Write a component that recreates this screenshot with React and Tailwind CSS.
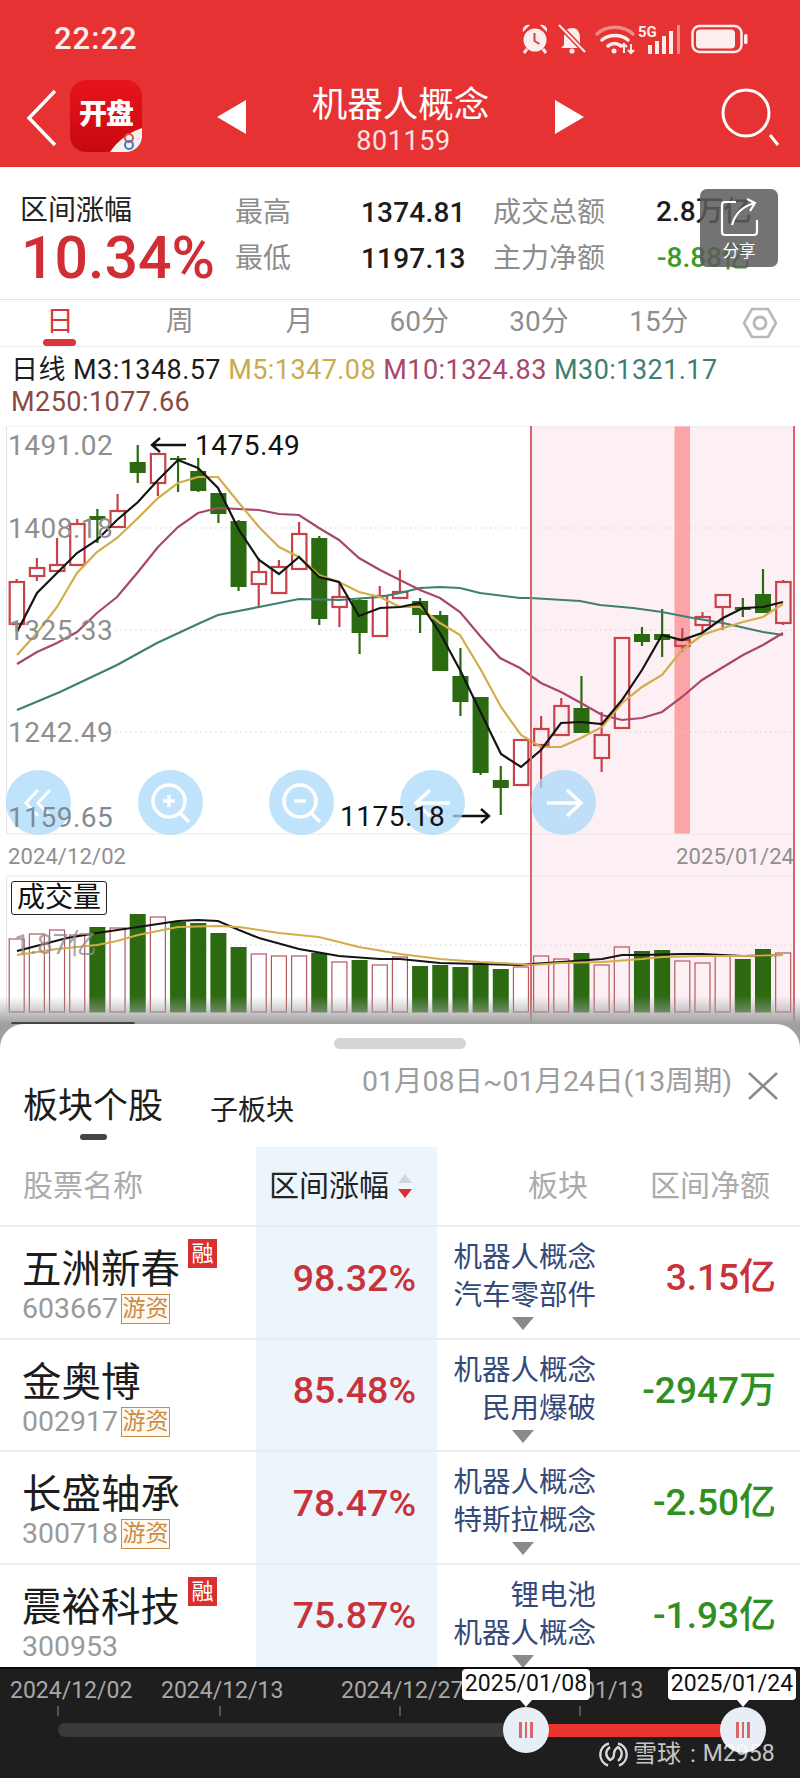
import React from 'react';

const FONT = { fontFamily: 'Roboto, "Noto Sans CJK SC", sans-serif' };

// candles: [wickTop, bodyTop, bodyBottom, wickBottom, up]
const candles = [
  [579, 582, 624, 633, 1], [558, 568, 576, 581, 1], [538, 565, 571, 571, 1], [519, 524, 565, 565, 1],
  [509, 516, 520, 543, 0], [494, 511, 527, 527, 1], [445, 462, 473, 483, 0], [454, 454, 483, 496, 1],
  [456, 458, 460, 492, 0], [458, 471, 491, 492, 0], [493, 493, 514, 523, 0], [520, 521, 587, 591, 0],
  [558, 572, 584, 607, 1], [560, 567, 593, 593, 1], [522, 534, 569, 570, 1], [536, 538, 619, 625, 0],
  [583, 597, 607, 627, 1], [599, 600, 633, 654, 0], [586, 596, 636, 636, 1], [570, 592, 598, 598, 1],
  [598, 601, 615, 633, 0], [611, 615, 671, 671, 0], [648, 676, 702, 716, 0], [697, 697, 773, 775, 0],
  [766, 780, 788, 815, 0], [740, 740, 785, 785, 1], [716, 729, 745, 788, 1], [698, 706, 735, 735, 1],
  [676, 708, 733, 733, 0], [712, 735, 758, 772, 1], [638, 638, 728, 728, 1], [627, 634, 642, 646, 0],
  [609, 634, 640, 657, 0], [628, 640, 646, 652, 1], [612, 617, 625, 632, 1], [595, 595, 607, 630, 1],
  [598, 607, 610, 617, 0], [569, 594, 613, 613, 0], [580, 582, 623, 625, 1],
];

const volumes = [
  [939, 1], [934, 1], [930, 1], [935, 1], [927, 0], [928, 1], [914, 0], [917, 1], [922, 0], [923, 0],
  [933, 0], [947, 0], [954, 1], [956, 1], [956, 1], [953, 0], [962, 1], [960, 0], [965, 1], [957, 1],
  [966, 0], [965, 0], [967, 0], [963, 0], [969, 0], [967, 1], [956, 1], [959, 1], [953, 0], [965, 1],
  [947, 1], [951, 0], [950, 0], [961, 1], [963, 1], [956, 1], [959, 0], [949, 0], [953, 1],
];

const m3 = '17,632 37,593 57,573 77,553 97,540 117,520 138,502 158,480 178,460 198,468 218,488 239,530 259,560 279,574 299,557 319,577 339,582 359,616 380,608 400,607 420,603 440,633 460,670 481,713 501,754 521,767 541,750 561,723 581,722 602,724 622,700 642,670 662,635 682,640 702,633 723,618 743,608 763,607 783,602';
const m5 = '17,655 37,633 57,607 77,573 97,552 117,538 138,518 158,498 178,483 198,477 218,477 239,503 259,527 279,547 299,557 319,575 339,582 359,592 380,597 400,607 420,607 440,623 460,635 481,670 501,707 521,735 541,747 561,747 581,738 602,727 622,703 642,687 662,675 682,650 702,635 723,628 743,622 763,617 783,604';
const m10 = '17,664 37,652 57,643 77,632 97,613 117,597 138,572 158,547 178,527 198,513 218,508 239,509 259,510 279,514 299,515 319,528 339,540 359,558 380,570 400,580 420,590 440,598 460,612 481,637 500,658 520,668 541,683 561,692 581,703 602,715 622,720 642,718 662,712 682,697 702,680 720,669 743,655 763,645 783,633';
const m30 = '17,710 60,692 117,665 157,643 200,623 218,615 259,607 299,599 339,600 380,597 400,593 420,588 440,587 460,588 480,593 520,598 530,598 580,601 600,605 633,608 662,612 693,618 723,623 763,632 783,635';
const volBlack = '17,951 67,938 97,933 138,927 178,921 198,920 218,921 239,930 259,938 299,949 339,956 380,959 400,959 440,963 480,964 520,965 531,964 561,962 602,959 622,955 642,955 682,954 702,954 743,956 783,955';
const volYellow = '17,955 57,949 97,945 117,941 138,935 178,927 218,926 239,927 279,933 319,937 359,947 400,954 440,959 480,962 520,964 531,965 561,963 602,962 642,959 662,957 702,956 743,956 783,955';

const rows = [
  { name: '五洲新春', code: '603667', rong: true, youzi: true, pct: '98.32%', blocks: ['机器人概念', '汽车零部件'], net: '3.15亿', up: true },
  { name: '金奥博', code: '002917', rong: false, youzi: true, pct: '85.48%', blocks: ['机器人概念', '民用爆破'], net: '-2947万', up: false },
  { name: '长盛轴承', code: '300718', rong: false, youzi: true, pct: '78.47%', blocks: ['机器人概念', '特斯拉概念'], net: '-2.50亿', up: false },
  { name: '震裕科技', code: '300953', rong: true, youzi: false, pct: '75.87%', blocks: ['锂电池', '机器人概念'], net: '-1.93亿', up: false },
];

const StatusIcons = () => (
  <svg width="232" height="34" viewBox="0 0 232 34" className="text-[#fdeeee]">
    {/* alarm */}
    <circle cx="15" cy="18" r="11.5" fill="currentColor" />
    <path d="M14.5 11v8l5 3" stroke="#c9474a" strokeWidth="2" fill="none" />
    <path d="M3 10c-1-5 3-8 7-7zM27 10c1-5-3-8-7-7z" fill="currentColor" />
    <path d="M7 27l-3 4M23 27l3 4" stroke="currentColor" strokeWidth="3" />
    {/* muted bell */}
    <path d="M52 6c-6 0-8 5-8 10v7l-3 3h22l-3-3v-7c0-5-2-10-8-10z" fill="currentColor" />
    <circle cx="52" cy="29" r="2.6" fill="currentColor" />
    <path d="M39 3l26 27" stroke="#e63232" strokeWidth="5" />
    <path d="M39 3l26 27" stroke="currentColor" strokeWidth="2" />
    {/* wifi */}
    <g fill="none" strokeLinecap="round">
      <path d="M77 12c10-9 26-9 36 0" stroke="#f08a84" strokeWidth="3.5" />
      <path d="M82 18c7-6 19-6 26 0" stroke="currentColor" strokeWidth="3.5" />
      <path d="M88 24c4-3 9-3 13 0" stroke="currentColor" strokeWidth="3.5" />
    </g>
    <circle cx="94" cy="29" r="2.5" fill="currentColor" />
    <path d="M104 31v-9m-3 3l3-3 3 3M111 22v9m-3-3l3 3 3-3" stroke="currentColor" strokeWidth="2" fill="none" />
    {/* 5G + signal */}
    <text x="118" y="15" fontSize="15" fontWeight="700" fill="currentColor" fontFamily="Roboto, sans-serif">5G</text>
    <g fill="currentColor">
      <rect x="128" y="23" width="4" height="9" />
      <rect x="135" y="19" width="4" height="13" />
      <rect x="142" y="14" width="4" height="18" />
      <rect x="149" y="9" width="4" height="23" />
    </g>
    <rect x="157" y="3" width="3" height="29" fill="#f08a84" />
    {/* battery */}
    <rect x="172.5" y="4" width="49" height="26" rx="7" fill="none" stroke="currentColor" strokeWidth="2.5" />
    <rect x="176" y="7.5" width="39" height="19" rx="4" fill="currentColor" />
    <rect x="224" y="12" width="3.5" height="10" rx="1.5" fill="currentColor" />
  </svg>
);

const AppIcon = () => (
  <div className="relative w-[72px] h-[72px] rounded-[16px] overflow-hidden bg-gradient-to-b from-[#e8141c] to-[#c8080f] flex justify-center pt-[18px]">
    <span className="text-[28px] leading-[34px] font-black text-white tracking-[-1px]">开盘</span>
    <svg width="36" height="36" viewBox="0 0 36 36" className="absolute right-0 bottom-0">
      <path d="M36 12C24 16 12 24 4 36h32z" fill="#f4f1ec" />
      <circle cx="23" cy="22" r="4" fill="none" stroke="#d9534f" strokeWidth="2" />
      <circle cx="23" cy="29" r="4" fill="none" stroke="#3b7cc4" strokeWidth="2" />
    </svg>
  </div>
);

const Header = () => (
  <div className="h-[167px] bg-[#e63232] text-white shrink-0">
    <div className="h-[76px] flex items-center justify-between pl-[54px] pr-[48px] pt-[1px]">
      <span className="text-[31px] leading-none font-medium tracking-[1px] text-[#fdeeee]">22:22</span>
      <StatusIcons />
    </div>
    <div className="flex items-start pl-[26px] pr-[20px]">
      <svg width="32" height="58" viewBox="0 0 32 58" className="mt-[13px] mr-[12px]">
        <path d="M29 2L3 29l26 27" fill="none" stroke="#fff" strokeWidth="3.5" />
      </svg>
      <div className="mt-[4px]">
        <AppIcon />
      </div>
      <svg width="30" height="34" viewBox="0 0 30 34" className="mt-[24px] ml-[75px]">
        <path d="M29 0v34L0 17z" fill="#fff" />
      </svg>
      <div className="w-[307px] flex flex-col items-center">
        <span className="text-[35.5px] leading-[44px] mt-[7px]">机器人概念</span>
        <span className="text-[27px] leading-[30px] tracking-[0.6px] text-[#fbe3e3] -mt-[1px] ml-[6px]">801159</span>
      </div>
      <svg width="30" height="34" viewBox="0 0 30 34" className="mt-[24px]">
        <path d="M1 0v34l29-17z" fill="#fff" />
      </svg>
      <svg width="60" height="60" viewBox="0 0 60 60" className="mt-[11px] ml-auto">
        <circle cx="26" cy="26" r="23" fill="none" stroke="#fff" strokeWidth="3" />
        <path d="M50 48l8 10" stroke="#fff" strokeWidth="3" />
      </svg>
    </div>
  </div>
);

const Stats = () => (
  <div className="relative h-[133px] border-b border-[#e4e4e4] shrink-0 flex">
    <div className="w-[235px] pl-[20px] pt-[26px]">
      <div className="text-[28px] leading-[36px] text-[#222]">区间涨幅</div>
      <div className="text-[59px] leading-[62px] font-medium text-[#cf2f34] -mt-[2px] ml-[1px]">10.34%</div>
    </div>
    <div className="flex-1 grid grid-cols-[126px_132px_163px] grid-rows-[46px_46px] pt-[23px] text-[28px] leading-[46px]">
      <span className="text-[#8d8d8d]">最高</span>
      <span className="text-[#1c1c1c] font-medium tracking-[0.2px]">1374.81</span>
      <span className="text-[#8d8d8d]">成交总额</span>
      <span className="text-[#8d8d8d]">最低</span>
      <span className="text-[#1c1c1c] font-medium tracking-[0.2px]">1197.13</span>
      <span className="text-[#8d8d8d]">主力净额</span>
    </div>
    <div className="absolute left-[656px] top-[22px] text-[28px] leading-[46px] font-medium">
      <div className="text-[#1c1c1c]">2.8万亿</div>
      <div className="text-[#3a9a2a] ml-[1px]">-8.88亿</div>
    </div>
    {/* share button floats over the figures */}
    <div className="absolute left-[700px] top-[22px] w-[78px] h-[78px] rounded-[7px] bg-[#5a5a5a]/85 flex flex-col items-center text-white">
      <svg width="42" height="46" viewBox="0 0 42 46" className="mt-[9px]">
        <path d="M18 4H7a3 3 0 0 0-3 3v27a3 3 0 0 0 3 3h29a3 3 0 0 0 3-3V22" fill="none" stroke="#fff" strokeWidth="2.2" />
        <path d="M14 27c3-11 11-19 23-22M29 1l8 4-5 8" fill="none" stroke="#fff" strokeWidth="2.2" />
      </svg>
      <span className="text-[16.5px] leading-[18px] -mt-[1px]">分享</span>
    </div>
  </div>
);

const Tabs = () => {
  const tabs = ['日', '周', '月', '60分', '30分', '15分'];
  return (
    <div className="h-[47px] border-b border-[#ededed] shrink-0 flex text-[28px] text-[#8f8f8f]">
      {tabs.map((t, i) => (
        <div key={t} className={'w-[119.8px] flex flex-col items-center ' + (i === 0 ? 'text-[#d9363a]' : '')}>
          <span className="leading-[36px] mt-[4px]">{t}</span>
          {i === 0 && <span className="w-[33px] h-[7px] rounded-full bg-[#d9363a] -mt-[1px]" />}
        </div>
      ))}
      <svg width="36" height="32" viewBox="0 0 36 32" className="ml-[23px] mt-[7px]">
        <path d="M10 2h16l8 14-8 14H10L2 16z" fill="none" stroke="#b9b9b9" strokeWidth="2.6" strokeLinejoin="round" />
        <circle cx="18" cy="16" r="6" fill="none" stroke="#b9b9b9" strokeWidth="3" />
      </svg>
    </div>
  );
};

const MaLegend = () => (
  <div className="h-[79px] shrink-0 pl-[11px] pt-[7px] text-[27px] leading-[32px] tracking-[0.45px]">
    <div className="whitespace-nowrap">
      <span className="text-[#1c1c1c]">日线 M3:1348.57 </span>
      <span className="text-[#c9ab4c]">M5:1347.08 </span>
      <span className="text-[#a8476e]">M10:1324.83 </span>
      <span className="text-[#3f7f72]">M30:1321.17</span>
    </div>
    <div className="text-[#8a4a44]">M250:1077.66</div>
  </div>
);

const CircleBtn = ({ x, children }) => (
  <div className="absolute top-[344px] w-[65px] h-[65px] rounded-full bg-[#a9daf9]/75 flex items-center justify-center" style={{ left: x }}>
    <svg width="50" height="50" viewBox="0 0 50 50" fill="none" stroke="#fff" strokeWidth="3.5">
      {children}
    </svg>
  </div>
);

const Chart = () => (
  <div className="relative flex-1 min-h-0 overflow-hidden">
    {/* svg uses page coordinates shifted by the chart's top at y=426 */}
    <svg width="800" height="600" viewBox="0 426 800 600" className="absolute left-0 top-0">
      <rect x="531" y="426" width="264" height="600" fill="#fdf0f4" />
      <rect x="674.5" y="426" width="15.5" height="408" fill="#fda4a9" />
      <path d="M7 426H795M7 834H795M7 876H795" stroke="#e6e6e6" strokeWidth="1.2" />
      <path d="M6.5 426V834M6.5 876V1014" stroke="#e6e6e6" strokeWidth="1.2" />
      <path d="M120 528H795M115 630H795M115 732H795M95 945H795" stroke="#d4d4d4" strokeWidth="1.2" strokeDasharray="1.5 3.5" />

      {candles.map(([wt, bt, bb, wb, up], i) => {
        const x = 16.7 + 20.17 * i;
        const col = up ? '#c8424a' : '#2c6a12';
        return (
          <g key={i}>
            <path d={`M${x} ${wt}V${bt}M${x} ${bb}V${wb}`} stroke={col} strokeWidth="2.2" />
            {up
              ? <rect x={x - 7} y={bt} width="14.4" height={bb - bt} fill="#fff" fillOpacity={i > 24 ? 0 : 1} stroke={col} strokeWidth="2.2" />
              : <rect x={x - 8} y={bt} width="16" height={bb - bt} fill={col} />}
          </g>
        );
      })}
      <polyline points={m30} fill="none" stroke="#3f7f72" strokeWidth="2.2" />
      <polyline points={m10} fill="none" stroke="#a8476e" strokeWidth="2.2" />
      <polyline points={m5} fill="none" stroke="#d3ad4a" strokeWidth="2.2" />
      <polyline points={m3} fill="none" stroke="#141414" strokeWidth="2.2" />

      {volumes.map(([top, up], i) => {
        const x = 16.7 + 20.17 * i;
        return up
          ? <rect key={i} x={x - 7.5} y={top} width="15" height={1012 - top} fill={i > 24 ? 'none' : '#fff'} stroke="#b4585f" strokeWidth="1.2" />
          : <rect key={i} x={x - 8} y={top} width="16" height={1012.5 - top} fill="#2c6a12" />;
      })}
      <polyline points={volBlack} fill="none" stroke="#141414" strokeWidth="2" />
      <polyline points={volYellow} fill="none" stroke="#d3ad4a" strokeWidth="2" />

      <path d="M531 426V1026M794 426V1026" stroke="#d9666b" strokeWidth="2" />

      <path d="M186 445H152m8-7l-8 7 8 7" fill="none" stroke="#111" strokeWidth="2.4" />
      <path d="M453 816H489m-8-7l8 7-8 7" fill="none" stroke="#111" strokeWidth="2.4" />
    </svg>

    <CircleBtn x={6}><path d="M24 12L12 25l12 13M36 12L24 25l12 13" strokeWidth="3" /></CircleBtn>
    <CircleBtn x={138}>
      <circle cx="23" cy="23" r="16" />
      <path d="M34 35l9 9M17 23h12M23 17v12" />
    </CircleBtn>
    <CircleBtn x={269}>
      <circle cx="23" cy="23" r="16" />
      <path d="M34 35l9 9M17 23h12" />
    </CircleBtn>
    <CircleBtn x={400}><path d="M8 25h34M22 12L8 25l14 13" /></CircleBtn>
    <CircleBtn x={531}><path d="M8 25h34M28 12l14 13-14 13" /></CircleBtn>

    <span className="absolute left-[8px] top-[3px] text-[28px] leading-[34px] tracking-[0.5px] text-[#8f8f8f]">1491.02</span>
    <span className="absolute left-[8px] top-[86px] text-[28px] leading-[34px] tracking-[0.5px] text-[#8f8f8f]">1408.18</span>
    <span className="absolute left-[8px] top-[188px] text-[28px] leading-[34px] tracking-[0.5px] text-[#8f8f8f]">1325.33</span>
    <span className="absolute left-[8px] top-[290px] text-[28px] leading-[34px] tracking-[0.5px] text-[#8f8f8f]">1242.49</span>
    <span className="absolute left-[8px] top-[375px] text-[28px] leading-[34px] tracking-[0.5px] text-[#7f8b95]">1159.65</span>
    <span className="absolute left-[195px] top-[3px] text-[28px] leading-[34px] tracking-[0.5px] text-[#111]">1475.49</span>
    <span className="absolute left-[340px] top-[374px] text-[28px] leading-[34px] tracking-[0.5px] text-[#111]">1175.18</span>

    <span className="absolute left-[8px] top-[417px] text-[22px] leading-[28px] tracking-[0.1px] text-[#8f8f8f]">2024/12/02</span>
    <span className="absolute left-[676px] top-[417px] text-[22px] leading-[28px] tracking-[0.1px] text-[#8f8f8f]">2025/01/24</span>

    <span className="absolute left-[11px] top-[455px] w-[96px] h-[34px] border border-[#222] rounded-[3px] bg-white text-[28px] leading-[31px] text-center text-[#111]">成交量</span>
    <span className="absolute left-[14px] top-[502px] text-[28px] leading-[34px] text-[#8f8f8f]/80">1.87亿</span>

    {/* sheet's shadow falling on the chart */}
    <div className="absolute left-0 right-0 bottom-0 h-[28px] bg-gradient-to-b from-transparent to-[#a0a0a0]" />
    <div className="absolute left-[11px] bottom-0 w-[124px] h-[2px] rounded-t-[2px] bg-[#444]" />
  </div>
);

const StockRow = ({ r }) => (
  <div className="h-[112.5px] shrink-0 border-t-2 border-[#ececec] grid grid-cols-[256px_181px_1fr_auto] relative">
    <div className="pl-[22px] pt-[18px]">
      <div className="flex items-start">
        <span className="text-[39.5px] leading-[50px] text-[#1c1c1c]">{r.name}</span>
        {r.rong && <span className="ml-[8px] -mt-[6px] w-[29px] h-[29px] bg-[#d9302f] text-white text-[22px] leading-[29px] text-center">融</span>}
      </div>
      <div className="flex items-center -mt-[3px]">
        <span className="text-[28.5px] leading-[34px] text-[#9a9a9a]">{r.code}</span>
        {r.youzi && <span className="ml-[3px] w-[49px] h-[30px] border border-[#c98a4a] bg-[#fff9ef] text-[#c98a4a] text-[23px] leading-[27px] text-center">游资</span>}
      </div>
    </div>
    <div className="bg-[#edf5fc] flex items-center justify-end pr-[21px] pb-[8px]">
      <span className="text-[37.5px] leading-none font-medium text-[#c8323a]">{r.pct}</span>
    </div>
    <div className="w-[159px] flex flex-col items-end pt-[12px] text-[28.5px] leading-[38px] text-[#34497a]">
      <span>{r.blocks[0]}</span>
      <span>{r.blocks[1]}</span>
      <svg width="22" height="13" viewBox="0 0 22 13" className="self-start ml-[75px] mt-[2px]">
        <path d="M0 0h22L11 13z" fill="#8a8a8a" />
      </svg>
    </div>
    <div className={'absolute right-[24px] top-[29px] text-[37px] leading-[44px] font-medium ' + (r.up ? 'text-[#c8323a]' : 'text-[#2f8f1f]')}>{r.net}</div>
  </div>
);

const Sheet = () => (
  <div className="h-[643px] shrink-0 bg-[#a0a0a0]">
    <div className="h-full rounded-t-[24px] bg-white overflow-hidden flex flex-col">
      <div className="flex justify-center pt-[14px] shrink-0">
        <span className="w-[132px] h-[11px] rounded-full bg-[#d4d4d4]" />
      </div>
      <div className="relative h-[98px] shrink-0">
        <span className="absolute left-[23px] top-[35px] text-[35px] leading-[46px] text-[#1c1c1c]">板块个股</span>
        <span className="absolute left-[80px] top-[85px] w-[27px] h-[6px] rounded-full bg-[#444]" />
        <span className="absolute left-[210px] top-[43px] text-[28px] leading-[38px] text-[#222]">子板块</span>
        <span className="absolute left-[362px] top-[15px] text-[28.5px] leading-[36px] text-[#9d9d9d] whitespace-nowrap">01月08日~01月24日(13周期)</span>
        <svg width="32" height="28" viewBox="0 0 32 28" className="absolute left-[747px] top-[23px]">
          <path d="M2 1l28 26M30 1L2 27" stroke="#8a8a8a" strokeWidth="2.6" />
        </svg>
      </div>
      <div className="h-[78px] shrink-0 grid grid-cols-[256px_181px_1fr] text-[30px] leading-[40px]">
        <div className="pl-[23px] pt-[19px] text-[#ababab]">股票名称</div>
        <div className="bg-[#edf5fc] pl-[13px] pt-[19px] text-[#222] flex items-start">
          <span>区间涨幅</span>
          <svg width="16" height="24" viewBox="0 0 16 24" className="ml-[8px] mt-[8px]">
            <path d="M8 0l7 9H1z" fill="#d4d4dc" />
            <path d="M1 15h14l-7 9z" fill="#d9302f" />
          </svg>
        </div>
        <div className="flex justify-between pl-[91px] pr-[30px] pt-[19px] text-[#ababab]">
          <span>板块</span>
          <span>区间净额</span>
        </div>
      </div>
      {rows.map((r) => <StockRow key={r.code} r={r} />)}
    </div>
  </div>
);

const Slider = () => (
  <div className="relative h-[111px] shrink-0 bg-[#1e1e1e] border-t-2 border-[#0c0c0c] overflow-hidden">
    <span className="absolute left-[10px] top-[8px] text-[23px] leading-[28px] text-[#a8a8a8]">2024/12/02</span>
    <span className="absolute left-[161px] top-[8px] text-[23px] leading-[28px] text-[#a8a8a8]">2024/12/13</span>
    <span className="absolute left-[341px] top-[8px] text-[23px] leading-[28px] text-[#a8a8a8]">2024/12/27</span>
    <span className="absolute left-[521px] top-[8px] text-[23px] leading-[28px] text-[#a8a8a8]">2025/01/13</span>
    {[57, 219, 399, 579].map((x) => (
      <span key={x} className="absolute top-[37px] w-[2px] h-[10px] bg-[#555]" style={{ left: x }} />
    ))}
    <div className="absolute left-[58px] top-[54px] w-[480px] h-[14px] rounded-l-full bg-[#3a3a3a]" />
    <div className="absolute left-[527px] top-[55px] w-[216px] h-[13px] bg-[#e8332f]" />
    {[526, 743].map((x, i) => (
      <React.Fragment key={x}>
        <div className="absolute top-[38px] w-[46px] h-[46px] rounded-full bg-[#e8eef5] flex items-center justify-center gap-[3px]" style={{ left: x - 23 }}>
          <span className="w-[2.5px] h-[16px] bg-[#d9666b]" />
          <span className="w-[2.5px] h-[16px] bg-[#d9666b]" />
          <span className="w-[2.5px] h-[16px] bg-[#d9666b]" />
        </div>
        <div className="absolute top-[0px] w-[128px] h-[31px] rounded-[4px] bg-white text-[#111] text-[23px] leading-[30px] text-center" style={{ left: x - 64 + (i === 0 ? 0 : -11) }}>
          {i === 0 ? '2025/01/08' : '2025/01/24'}
        </div>
        <span className="absolute top-[31px] w-0 h-0 border-l-[6px] border-r-[6px] border-t-[7px] border-l-transparent border-r-transparent border-t-white" style={{ left: x - 6 }} />
      </React.Fragment>
    ))}
    {/* watermark */}
    <div className="absolute left-[599px] top-[68px] flex items-center text-white/75 text-[24px] leading-[34px] whitespace-nowrap">
      <svg width="29" height="29" viewBox="0 0 29 29" fill="none" stroke="#d8d8d8" strokeWidth="2.4" className="mr-[5px]">
        <path d="M10 3.5a11.5 11.5 0 0 0-1 22M19 3.5a11.5 11.5 0 0 1 1 22" />
        <path d="M11 7c-5 4-5 9 0 13 3-1 4-4 4-6s1-5 4-7c5 4 5 9 0 14" />
      </svg>
      <span>雪球</span>
      <span className="ml-[9px] mr-[7px]">:</span>
      <span className="text-[23px]">M2958</span>
    </div>
  </div>
);

export default function App() {
  return (
    <div className="w-[800px] h-[1778px] overflow-hidden bg-white flex flex-col" style={FONT}>
      <Header />
      <Stats />
      <Tabs />
      <MaLegend />
      <Chart />
      <Sheet />
      <Slider />
    </div>
  );
}
